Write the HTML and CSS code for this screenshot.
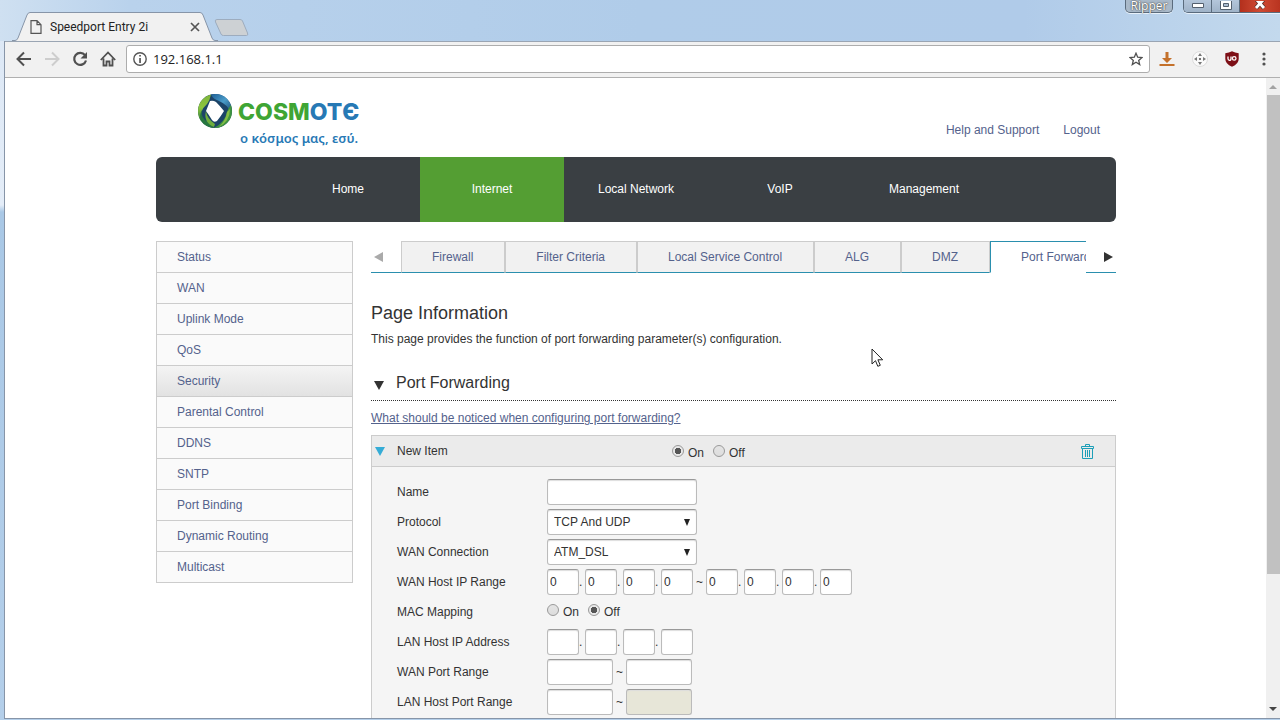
FILE: index.html
```html
<!DOCTYPE html>
<html lang="en">
<head>
    <meta charset="UTF-8">
    <meta name="viewport" content="width=device-width, initial-scale=1.0">
    <title>Speedport Entry 2i</title>
    <link rel="stylesheet" href="styles.css">
</head>
<body>

    <header class="titlebar">
        <div class="tab">
            <svg class="tab-edge" width="18" height="29" viewBox="0 0 18 29"><path d="M0 29V28.500H3Q5 28.500 6 26L15 3Q16 .5 18 .5V29Z" fill="#f1f1f1"/><path d="M0 28.500H3Q5 28.500 6 26L15 3Q16 .5 18 .5" fill="none" stroke="#8795a8"/></svg>
            <div class="tab-body">
                <svg width="12" height="14" viewBox="0 0 12 14"><path d="M1 .7h6l4 4v8.600H1zM7 .7v4h4" fill="none" stroke="#555" stroke-width="1.200"/></svg>
                <span class="tab-title">Speedport Entry 2i</span>
                <button class="icon-btn" aria-label="Close tab"><svg width="10" height="10" viewBox="0 0 10 10"><path d="M1 1l8 8M9 1L1 9" stroke="#555" stroke-width="1.700"/></svg></button>
            </div>
            <svg class="tab-edge" width="18" height="29" viewBox="0 0 18 29"><path d="M18 29V28.500H15Q13 28.500 12 26L3 3Q2 .5 0 .5V29Z" fill="#f1f1f1"/><path d="M18 28.500H15Q13 28.500 12 26L3 3Q2 .5 0 .5" fill="none" stroke="#8795a8"/></svg>
        </div>
        <button class="icon-btn new-tab" aria-label="New tab"><svg width="36" height="18" viewBox="0 0 36 18"><path d="M3 .5h23q2 0 2.500 1.500l5 12q1 2.500-1 2.500H9.500q-2 0-2.500-1.500L1.500 3Q.5 .5 3 .5z" fill="#cdd1d4" stroke="#9dacbe"/></svg></button>
        <div class="win-controls">
            <button class="user-btn">Ripper</button>
            <div class="win-group">
                <button class="win-btn" aria-label="Minimize"><svg width="14" height="6" viewBox="0 0 14 6"><path d="M1.500 .5h11v4h-11z" fill="#fff" stroke="#54606e"/></svg></button>
                <button class="win-btn" aria-label="Maximize"><svg width="12" height="10" viewBox="0 0 12 10"><path d="M.5 -4h11v12.500H.5z" fill="#fff" stroke="#54606e"/><path d="M3.500 2.500h5v3h-5z" fill="#a9bbcf" stroke="#54606e"/></svg></button>
                <button class="win-btn win-close" aria-label="Close"><svg width="12" height="11" viewBox="0 0 12 11"><path d="M2 -2l8 9M10 -2L2 7" stroke="#5d3430" stroke-width="4.500"/><path d="M2 -2l8 9M10 -2L2 7" stroke="#fff" stroke-width="2.800"/></svg></button>
            </div>
        </div>
    </header>

    <div class="window">
        <div class="toolbar">
            <button class="icon-btn" aria-label="Back"><svg width="16" height="16" viewBox="0 0 16 16"><path d="M15 8H2M8 1.500L1.500 8 8 14.500" fill="none" stroke="#505050" stroke-width="2"/></svg></button>
            <button class="icon-btn" aria-label="Forward"><svg width="16" height="16" viewBox="0 0 16 16"><path d="M1 8h13M8 1.500L14.500 8 8 14.500" fill="none" stroke="#cdcdcd" stroke-width="2"/></svg></button>
            <button class="icon-btn" aria-label="Reload"><svg width="16" height="16" viewBox="0 0 16 16"><path d="M13 4.200A6 6 0 1 0 14 9.500" fill="none" stroke="#505050" stroke-width="2.200"/><path d="M15 1v6.500H8.500z" fill="#505050"/></svg></button>
            <button class="icon-btn" aria-label="Home"><svg width="16" height="16" viewBox="0 0 16 16"><path d="M.8 9L8 1.500 15.200 9M3.500 7.500v7h3v-4h3v4h3v-7" fill="none" stroke="#505050" stroke-width="1.800"/></svg></button>
            <div class="omnibox">
                <svg width="14" height="14" viewBox="0 0 14 14"><circle cx="7" cy="7" r="6.200" fill="none" stroke="#555" stroke-width="1.400"/><path d="M6.200 3h1.700v1.600H6.200zM6.200 6h1.700v5H6.200z" fill="#555"/></svg>
                <input class="url" type="text" value="192.168.1.1" aria-label="Address">
                <button class="icon-btn" aria-label="Bookmark"><svg width="14" height="14" viewBox="0 0 14 14"><path d="M7 1.200l1.700 4 4.300.4-3.300 2.800 1 4.200L7 10.300l-3.700 2.300 1-4.200L1 5.600l4.300-.4z" fill="none" stroke="#505050" stroke-width="1.300"/></svg></button>
            </div>
            <div class="extensions">
                <button class="icon-btn" aria-label="Downloads"><svg width="16" height="16" viewBox="0 0 16 16"><path d="M6.500 1h3v6H13l-5 5-5-5h3.500zM.5 13h15v2H.5z" fill="#c4712b"/></svg></button>
                <button class="icon-btn" aria-label="Move"><svg width="16" height="16" viewBox="0 0 16 16"><circle cx="8" cy="8" r="7.500" fill="#fafafa" stroke="#dcdcdc"/><path d="M8 2l2 3H6zM8 14l2-3H6zM2 8l3-2v4zM14 8l-3-2v4zM7 7h2v2H7z" fill="#777"/></svg></button>
                <button class="icon-btn" aria-label="uBlock"><svg width="14" height="16" viewBox="0 0 14 16"><path d="M7 .3Q10 2 13.700 2.300V8Q13.700 13 7 15.700.3 13 .3 8V2.300Q4 2 7 .3z" fill="#7d0f16"/><path d="M3 5.500v2.300q0 1.500 1.500 1.500T6 7.800V5.500" fill="none" stroke="#fff" stroke-width="1.300"/><circle cx="9.200" cy="7.400" r="1.800" fill="none" stroke="#fff" stroke-width="1.300"/></svg></button>
                <button class="icon-btn" aria-label="Menu"><svg width="16" height="16" viewBox="0 0 16 16"><circle cx="8" cy="3" r="1.600" fill="#505050"/><circle cx="8" cy="8" r="1.600" fill="#505050"/><circle cx="8" cy="13" r="1.600" fill="#505050"/></svg></button>
            </div>
        </div>

        <div class="viewport">
            <div class="page">
                <div class="wrapper">
                    <div class="top">
                        <div class="logo">
                            <svg width="36" height="36" viewBox="0 0 36 36">
                                <defs>
                                    <linearGradient id="lime" x1="0" y1="0" x2="0" y2="1"><stop offset="0" stop-color="#7fb53a"/><stop offset=".5" stop-color="#8cc63f"/><stop offset="1" stop-color="#2f7d3c"/></linearGradient>
                                    <linearGradient id="sky" x1="0" y1="0" x2="1" y2="1"><stop offset="0" stop-color="#1d5f96"/><stop offset=".5" stop-color="#4a9cc9"/><stop offset="1" stop-color="#17466f"/></linearGradient>
                                </defs>
                                <circle cx="18" cy="18" r="17" fill="#1c4468"/>
                                <path d="M14 1.500A17 17 0 0 0 1 18Q1 24 4 28 2 18 10 11 13 7 14 1.500z" fill="url(#lime)"/>
                                <path d="M5 17Q3 25 12 30 16 32 17 35 8 34 4 28 2 22 5 17z" fill="#27763f"/>
                                <path d="M9 18Q10 26 18 31L17 34Q6 29 9 18z" fill="#6fae3d"/>
                                <path d="M14 1.500Q27-1 33 10 35 14 34 20 30 11 22 8 16 6 14 1.500z" fill="url(#sky)"/>
                                <path d="M34 12Q38 26 26 33 21 35.500 17 35 28 29 30 19 31 15 34 12z" fill="#3f9440"/>
                                <path d="M33 16Q33 28 22 34 29 27 30 19z" fill="#86bd45"/>
                                <path d="M13 8Q16 7 19 9 23 13 27 18 24 23 20 28 17 30 15 27 12 22 9 18 11 13 13 8z" fill="#fff"/>
                            </svg>
                            <div class="logo-text">
                                <div class="brand">COSM<span class="brand-blue">OTЄ</span></div>
                                <div class="slogan" lang="el">ο κόσμος μας, εσύ.</div>
                            </div>
                        </div>
                        <div class="top-links">
                            <a href="#">Help and Support</a>
                            <a href="#">Logout</a>
                        </div>
                    </div>

                    <nav class="main-nav">
                        <a href="#">Home</a>
                        <a href="#" class="active">Internet</a>
                        <a href="#">Local Network</a>
                        <a href="#">VoIP</a>
                        <a href="#">Management</a>
                    </nav>

                    <div class="columns">
                        <nav class="side-nav">
                            <a href="#">Status</a>
                            <a href="#">WAN</a>
                            <a href="#">Uplink Mode</a>
                            <a href="#">QoS</a>
                            <a href="#" class="active">Security</a>
                            <a href="#">Parental Control</a>
                            <a href="#">DDNS</a>
                            <a href="#">SNTP</a>
                            <a href="#">Port Binding</a>
                            <a href="#">Dynamic Routing</a>
                            <a href="#">Multicast</a>
                        </nav>

                        <main class="content">
                            <div class="sub-tabs">
                                <button class="tab-arrow" aria-label="Previous"><svg width="15" height="10" viewBox="0 0 15 10"><path d="M12 0v10L3 5z" fill="#aaa"/></svg></button>
                                <div class="tab-list">
                                    <a href="#">Firewall</a>
                                    <a href="#">Filter Criteria</a>
                                    <a href="#">Local Service Control</a>
                                    <a href="#">ALG</a>
                                    <a href="#">DMZ</a>
                                    <a href="#" class="active">Port Forwarding</a>
                                </div>
                                <button class="tab-arrow next" aria-label="Next"><svg width="15" height="10" viewBox="0 0 15 10"><path d="M3 0v10l9-5z" fill="#333"/></svg></button>
                            </div>

                            <h1>Page Information</h1>
                            <p class="intro">This page provides the function of port forwarding parameter(s) configuration.</p>

                            <h2><svg width="10" height="9" viewBox="0 0 10 9"><path d="M0 0h10L5 9z" fill="#333"/></svg>Port Forwarding</h2>
                            <a href="#" class="help-link">What should be noticed when configuring port forwarding?</a>

                            <form class="panel">
                                <div class="panel-head">
                                    <svg width="10" height="9" viewBox="0 0 10 9"><path d="M0 0h10L5 9z" fill="#35acd6"/></svg>
                                    <span class="panel-title">New Item</span>
                                    <div class="radios">
                                        <label><input type="radio" name="enable" checked>On</label>
                                        <label><input type="radio" name="enable">Off</label>
                                    </div>
                                    <button type="button" class="icon-btn trash" aria-label="Delete"><svg width="13" height="15" viewBox="0 0 13 15"><path d="M.5 2.500h12v2H.5zM4.500 2.500v-2h4v2M1.500 4.500v10h10v-10M4.500 6v7M6.500 6v7M8.500 6v7" fill="none" stroke="#1d9fb8"/></svg></button>
                                </div>
                                <div class="panel-body">
                                    <div class="row">
                                        <label class="name" for="itemName">Name</label>
                                        <input class="wide" type="text" id="itemName">
                                    </div>
                                    <div class="row">
                                        <label class="name" for="protocol">Protocol</label>
                                        <select class="wide" id="protocol"><option>TCP And UDP</option></select>
                                    </div>
                                    <div class="row">
                                        <label class="name" for="wanConn">WAN Connection</label>
                                        <select class="wide" id="wanConn"><option>ATM_DSL</option></select>
                                    </div>
                                    <div class="row">
                                        <label class="name" for="wanIp">WAN Host IP Range</label>
                                        <div class="ip">
                                            <input type="text" id="wanIp" value="0"><span>.</span>
                                            <input type="text" value="0" aria-label="From 2"><span>.</span>
                                            <input type="text" value="0" aria-label="From 3"><span>.</span>
                                            <input type="text" value="0" aria-label="From 4">
                                        </div>
                                        <span class="tilde">~</span>
                                        <div class="ip">
                                            <input type="text" value="0" aria-label="To 1"><span>.</span>
                                            <input type="text" value="0" aria-label="To 2"><span>.</span>
                                            <input type="text" value="0" aria-label="To 3"><span>.</span>
                                            <input type="text" value="0" aria-label="To 4">
                                        </div>
                                    </div>
                                    <div class="row">
                                        <span class="name">MAC Mapping</span>
                                        <div class="radios">
                                            <label><input type="radio" name="mac">On</label>
                                            <label><input type="radio" name="mac" checked>Off</label>
                                        </div>
                                    </div>
                                    <div class="row">
                                        <label class="name" for="lanIp">LAN Host IP Address</label>
                                        <div class="ip">
                                            <input type="text" id="lanIp"><span>.</span>
                                            <input type="text" aria-label="LAN 2"><span>.</span>
                                            <input type="text" aria-label="LAN 3"><span>.</span>
                                            <input type="text" aria-label="LAN 4">
                                        </div>
                                    </div>
                                    <div class="row">
                                        <label class="name" for="wanPort">WAN Port Range</label>
                                        <input class="port" type="text" id="wanPort">
                                        <span class="tilde">~</span>
                                        <input class="port" type="text" aria-label="WAN port end">
                                    </div>
                                    <div class="row">
                                        <label class="name" for="lanPort">LAN Host Port Range</label>
                                        <input class="port" type="text" id="lanPort">
                                        <span class="tilde">~</span>
                                        <input class="port" type="text" aria-label="LAN port end" disabled>
                                    </div>
                                </div>
                            </form>
                        </main>
                    </div>
                </div>
            </div>
            <div class="scrollbar">
                <svg width="14" height="17" viewBox="0 0 14 17"><path d="M3 11h8L7 7z" fill="#a3a3a3"/></svg>
                <div class="track"><div class="thumb"></div></div>
                <svg width="14" height="17" viewBox="0 0 14 17"><path d="M3 6h8l-4 4z" fill="#444"/></svg>
            </div>
        </div>
    </div>

    <svg class="cursor" width="13" height="20" viewBox="0 0 13 20"><path d="M1 1v15l3.500-3.300 2.300 5.600 2.500-1-2.400-5.500h4.800z" fill="#fff" stroke="#222"/></svg>

</body>
</html>
```
FILE: styles.css
```css
* { box-sizing: border-box; }
body { margin: 0; height: 100vh; overflow: hidden; display: flex; flex-direction: column; background: linear-gradient(#dbe7f5 0, #e4edf8 205px, #a9c8e6 212px, #b4cfea 100%); font: 12px "Liberation Sans", Arial, sans-serif; color: #333; }
a { color: #54628c; text-decoration: none; }
svg { display: block; flex: none; }
button { font: inherit; padding: 0; cursor: pointer; }
input, select { font: inherit; color: #333; }
.icon-btn { background: none; border: none; flex: none; }

/* browser window */
.titlebar { height: 41px; flex: none; display: flex; align-items: flex-end; padding-left: 12px; background: linear-gradient(90deg, #cfe0f1 0, #b9d2ec 130px, #b0cce9 50%, #b0cbe9 80%, #c3d9ed 100%); }
.tab { display: flex; height: 29px; }
.tab-body { width: 170px; display: flex; align-items: center; background: #f1f1f1; border-top: 1px solid #8795a8; }
.tab-title { flex: 1; padding-left: 8px; font: 12px Roboto, sans-serif; color: #222; }
.new-tab { align-self: center; margin: 14px 0 0 -4px; }
.win-controls { display: flex; align-self: flex-start; margin-left: auto; gap: 10px; }
.user-btn { width: 48px; height: 13px; border: 1px solid #5a6b7d; border-top: none; border-radius: 0 0 5px 5px; background: #a9b9c9; box-shadow: 0 1px 0 #e8f1fa; color: #fff; font: 12px/8px "Open Sans", sans-serif; text-shadow: 0 0 1px #333, 0 0 2px #444; }
.win-group { display: flex; height: 13px; border: 1px solid #5a6b7d; border-top: none; border-right: none; border-radius: 0 0 0 5px; box-shadow: 0 1px 0 #e8f1fa; overflow: hidden; }
.win-btn { width: 28px; display: flex; justify-content: center; align-items: center; border: none; border-right: 1px solid #5a6b7d; background: linear-gradient(#b4c6da, #9fb3c8); }
.win-close { width: 40px; background: linear-gradient(90deg, #b3301d, #cf4a33, #b93420); border-right: none; }
.window { flex: 1; min-height: 0; display: flex; flex-direction: column; margin: 0 0 1px 4px; border-left: 1px solid #8795a8; border-bottom: 1px solid #8795a8; background: #fff; }
.toolbar { height: 37px; flex: none; display: flex; align-items: center; gap: 12px; padding: 0 8px 2px 11px; background: #f1f1f1; border-top: 1px solid #9aa5b3; border-bottom: 1px solid #b0b0b0; }
.omnibox { flex: 1; height: 28px; display: flex; align-items: center; margin-left: -2px; padding: 0 6px; background: #fff; border: 1px solid #adadad; border-radius: 3px; }
.url { flex: 1; min-width: 0; margin-left: 6px; padding: 0; border: none; outline: none; font: 13px "Open Sans", sans-serif; color: #222; }
.extensions { display: flex; align-items: center; gap: 17px; margin-left: -3px; }
.viewport { flex: 1; min-height: 0; display: flex; }
.page { flex: 1; overflow: hidden; padding-left: 1px; }
.scrollbar { width: 14px; display: flex; flex-direction: column; background: #f0f0f0; }
.track { flex: 1; padding-left: 1px; }
.thumb { height: 79%; background: #c1c1c1; }

/* router page */
.wrapper { max-width: 960px; margin: 0 auto; }
.top { height: 79px; display: flex; justify-content: space-between; }
.logo { display: flex; gap: 5px; padding: 15px 0 0 41px; }
.logo-text { padding-top: 3px; }
.brand { font: 800 23px/32px Inter, sans-serif; color: #3fa535; }
.brand-blue { color: #2779b5; }
.slogan { padding-left: 2px; font: 600 13px/20px "Noto Sans", sans-serif; color: #2779b5; }
.top-links { display: flex; gap: 24px; padding: 45px 16px 0 0; }
.main-nav { height: 65px; display: flex; justify-content: center; background: #3a3f43; border-radius: 6px; }
.main-nav a { width: 15%; color: #fff; line-height: 64px; text-align: center; }
.main-nav .active { background: #549e33; }
.columns { display: flex; gap: 18px; align-items: flex-start; margin-top: 19px; }
.side-nav { width: 197px; flex: none; border: 1px solid #ccc; background: #fafafa; }
.side-nav a { display: block; padding-left: 20px; line-height: 30px; border-bottom: 1px solid #ccc; }
.side-nav a:last-child { border-bottom: none; }
.side-nav .active { background: linear-gradient(#f4f4f4, #e2e2e2); }
.content { flex: 1; min-width: 0; }

.sub-tabs { display: flex; height: 32px; }
.tab-arrow { width: 30px; flex: none; background: none; border: none; border-bottom: 1px solid #2a8fae; }
.next { padding-left: 15px; }
.tab-list { flex: 1; display: flex; overflow: hidden; }
.tab-list a { flex: none; padding: 0 31px 0 30px; line-height: 30px; background: #f1f1f1; border: 1px solid #ccc; border-bottom-color: #2a8fae; }
.tab-list .active { background: #fff; border-color: #2a8fae; border-bottom-color: #fff; }

h1 { margin: 29px 0 0; font-size: 18px; line-height: 22px; font-weight: normal; }
.intro { margin: 7px 0 0; line-height: 16px; }
h2 { display: flex; align-items: center; gap: 12px; margin: 23px 0 0; padding: 0 3px 4px; height: 31px; font-size: 16px; font-weight: normal; line-height: 22px; border-bottom: 1px dotted #333; }
h2 svg { margin-top: 5px; }
.help-link { display: block; margin-top: 9px; line-height: 16px; text-decoration: underline; }
.panel { margin-top: 9px; border: 1px solid #ccc; background: #f5f5f5; }
.panel-head { height: 31px; display: flex; align-items: center; padding: 0 21px 0 3px; background: #ebebeb; border-bottom: 1px solid #ccc; }
.panel-title { width: 275px; margin-left: 12px; }
.panel-head .radios { padding-top: 4px; }
.trash { margin-left: auto; }
.panel-body { padding: 10px 25px; }
.row { display: flex; align-items: center; height: 30px; }
.name { width: 150px; flex: none; }
.radios { display: flex; gap: 9px; }
.radios label { display: flex; align-items: center; gap: 4px; }
.radios input { appearance: none; width: 12px; height: 12px; margin: 0 0 4px; border: 1px solid #999; border-radius: 50%; background: linear-gradient(#e4e4e4, #ddd); }
.radios input:checked { background: radial-gradient(circle, #555 0, #555 3px, #e8e8e8 3px); }
.row input[type="text"], .row select { height: 26px; padding: 0 0 0 2px; border: 1px solid #bbb; border-top-color: #999; border-radius: 3px; background: #fff; box-shadow: inset 0 1px 1px #ddd; }
.row .wide { width: 150px; }
.row select { appearance: none; padding: 0 6px; background: #fff url("data:image/svg+xml,%3Csvg xmlns='http://www.w3.org/2000/svg' width='6' height='7'%3E%3Cpath d='M0 0h6L3 7z' fill='%23222'/%3E%3C/svg%3E") no-repeat right 6px center; }
.ip { display: flex; align-items: center; }
.ip input { width: 32px; }
.ip span { width: 6px; }
.tilde { width: 13px; text-align: center; }
.row .port { width: 66px; }
.row input[type="text"]:disabled { background: #e7e6d8; }

/* mouse pointer over the page */
.cursor { position: absolute; left: 871px; top: 348px; }
```
